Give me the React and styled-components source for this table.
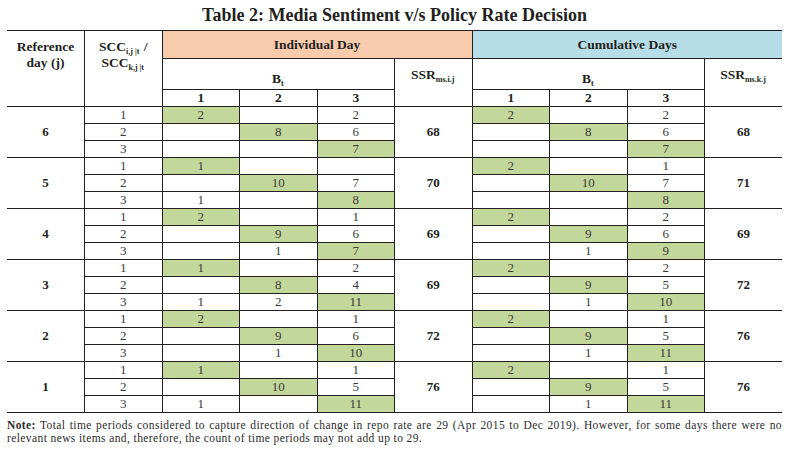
import React from 'react'
import styled, {createGlobalStyle} from 'styled-components'

const groups = [
    {day: 6, ind: [[2, '', 2], ['', 8, 6], ['', '', 7]], ssrI: 68, cum: [[2, '', 2], ['', 8, 6], ['', '', 7]], ssrK: 68},
    {day: 5, ind: [[1, '', ''], ['', 10, 7], [1, '', 8]], ssrI: 70, cum: [[2, '', 1], ['', 10, 7], ['', '', 8]], ssrK: 71},
    {day: 4, ind: [[2, '', 1], ['', 9, 6], ['', 1, 7]], ssrI: 69, cum: [[2, '', 2], ['', 9, 6], ['', 1, 9]], ssrK: 69},
    {day: 3, ind: [[1, '', 2], ['', 8, 4], [1, 2, 11]], ssrI: 69, cum: [[2, '', 2], ['', 9, 5], ['', 1, 10]], ssrK: 72},
    {day: 2, ind: [[2, '', 1], ['', 9, 6], ['', 1, 10]], ssrI: 72, cum: [[2, '', 1], ['', 9, 5], ['', 1, 11]], ssrK: 76},
    {day: 1, ind: [[1, '', 1], ['', 10, 5], [1, '', 11]], ssrI: 76, cum: [[2, '', 1], ['', 9, 5], ['', 1, 11]], ssrK: 76},
]

const tones = {
    orange: '#f8cbad',
    blue: '#b7dee8',
    green: '#c4d79b',
}

export default function App() {
    return (
        <Page>
            <GlobalStyle/>
            <Title>Table 2: Media Sentiment v/s Policy Rate Decision</Title>
            <Table>
                <thead>
                <tr>
                    <Head rowSpan={3} $valign="top">Reference<br/>day (j)</Head>
                    <Head rowSpan={3} $valign="top">
                        SCC<Sub>i,j |t</Sub> /<br/>SCC<Sub>k,j |t</Sub>
                    </Head>
                    <Head colSpan={4} $tone="orange" $h={27}>Individual Day</Head>
                    <Head colSpan={4} $tone="blue" $h={27}>Cumulative Days</Head>
                </tr>
                <tr>
                    <Head colSpan={3} $h={28} $valign="bottom">B<Sub>t</Sub></Head>
                    <Head rowSpan={2} $valign="top">SSR<Sub>ms.i.j</Sub></Head>
                    <Head colSpan={3} $h={28} $valign="bottom">B<Sub>t</Sub></Head>
                    <Head rowSpan={2} $valign="top">SSR<Sub>ms.k.j</Sub></Head>
                </tr>
                <tr>
                    {[1, 2, 3, 1, 2, 3].map((n, i) => (
                        <Head key={i} $h={16}>{n}</Head>
                    ))}
                </tr>
                </thead>
                <tbody>
                {groups.map(g => g.ind.map((row, r) => (
                    <tr key={`${g.day}-${r}`}>
                        {r === 0 && <Cell rowSpan={3} $bold>{g.day}</Cell>}
                        <Cell>{r + 1}</Cell>
                        {row.map((v, c) => (
                            <Cell key={c} $tone={c === r ? 'green' : undefined}>{v}</Cell>
                        ))}
                        {r === 0 && <Cell rowSpan={3} $bold>{g.ssrI}</Cell>}
                        {g.cum[r].map((v, c) => (
                            <Cell key={c} $tone={c === r ? 'green' : undefined}>{v}</Cell>
                        ))}
                        {r === 0 && <Cell rowSpan={3} $bold>{g.ssrK}</Cell>}
                    </tr>
                )))}
                </tbody>
            </Table>
            <Note>
                <NoteLine $justify>
                    <b>Note:</b> Total time periods considered to capture direction of change in repo rate are 29
                    (Apr 2015 to Dec 2019). However, for some days there were no
                </NoteLine>
                <NoteLine>
                    relevant news items and, therefore, the count of time periods may not add up to 29.
                </NoteLine>
            </Note>
        </Page>
    )
}

const GlobalStyle = createGlobalStyle`
  body {
    margin: 0;
    background: #fff;
    color: #231f20;
    font-family: "Liberation Serif", "Times New Roman", serif;
  }
`
const Page = styled.div`
  width: 775px;
  padding: 4px 7px 0;
`
const Title = styled.h2`
  margin: 0;
  height: 26px;
  line-height: 22px;
  font-size: 18px;
  font-weight: 700;
  text-align: center;
  color: #231f20;
`
const Table = styled.table`
  width: 775px;
  table-layout: fixed;
  border-collapse: collapse;
  border-left: hidden;
  border-right: hidden;
`
const Head = styled.th`
  height: ${p => p.$h ? `${p.$h}px` : 'auto'};
  padding: ${p => p.$valign === 'top' ? '8px 0 0' : p.$valign === 'bottom' ? '0 0 2px' : '0'};
  vertical-align: ${p => p.$valign || 'middle'};
  border: 1px solid #231f20;
  background: ${p => p.$tone ? tones[p.$tone] : '#fff'};
  font-size: 13.5px;
  line-height: 16px;
  font-weight: 700;
  text-align: center;
  color: #231f20;
`
const Cell = styled.td`
  height: 16px;
  padding: 0;
  border: 1px solid #231f20;
  background: ${p => p.$tone ? tones[p.$tone] : '#fff'};
  font-size: 13px;
  line-height: 16px;
  font-weight: ${p => p.$bold ? 700 : 400};
  text-align: center;
  color: ${p => p.$bold ? '#231f20' : '#3a3a3a'};
`
const Sub = styled.sub`
  font-size: 8px;
  vertical-align: -3px;
  line-height: 0;
  margin-right: 1px;
`
const Note = styled.div`
  margin-top: 6px;
  font-size: 11.5px;
  line-height: 13px;
  letter-spacing: 0.4px;
  color: #2b2b2b;
`
const NoteLine = styled.div`
  text-align: ${p => p.$justify ? 'justify' : 'left'};
  text-align-last: ${p => p.$justify ? 'justify' : 'auto'};
  white-space: nowrap;
`
